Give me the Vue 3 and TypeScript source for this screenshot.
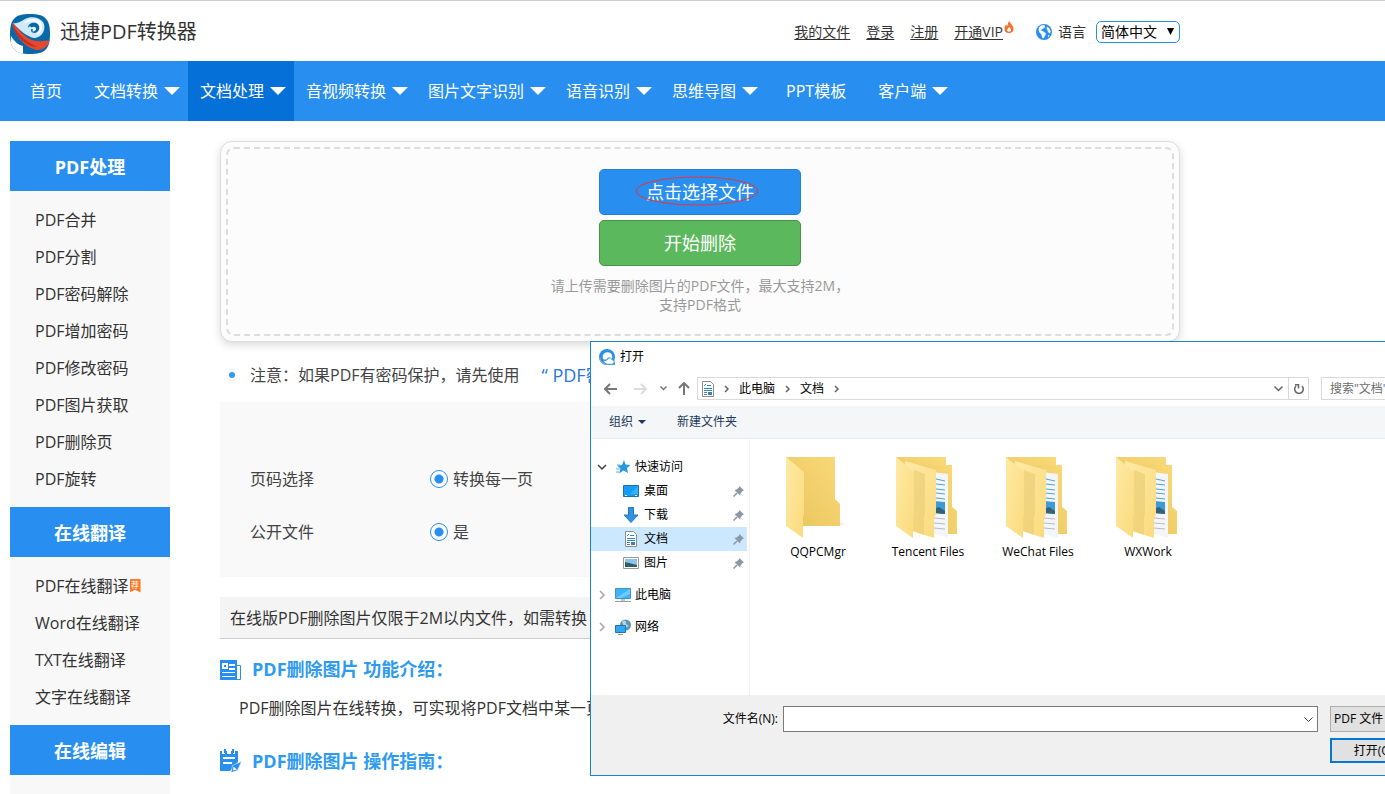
<script setup lang="ts">
import { ref } from 'vue'

interface NavItem { label: string; menu: boolean; active?: boolean }
interface SideGroup { title: string; items: { label: string; badge?: string }[] }
interface TreeRow { label: string; icon: string; level: 1 | 2; open?: boolean; selected?: boolean; spaced?: boolean }

const nav: NavItem[] = [
  { label: '首页', menu: false },
  { label: '文档转换', menu: true },
  { label: '文档处理', menu: true, active: true },
  { label: '音视频转换', menu: true },
  { label: '图片文字识别', menu: true },
  { label: '语音识别', menu: true },
  { label: '思维导图', menu: true },
  { label: 'PPT模板', menu: false },
  { label: '客户端', menu: true },
]

const groups: SideGroup[] = [
  {
    title: 'PDF处理',
    items: ['PDF合并', 'PDF分割', 'PDF密码解除', 'PDF增加密码', 'PDF修改密码', 'PDF图片获取', 'PDF删除页', 'PDF旋转'].map(label => ({ label })),
  },
  {
    title: '在线翻译',
    items: [{ label: 'PDF在线翻译', badge: '荐' }, { label: 'Word在线翻译' }, { label: 'TXT在线翻译' }, { label: '文字在线翻译' }],
  },
  { title: '在线编辑', items: [] },
]

const tree: TreeRow[] = [
  { label: '快速访问', icon: 'star', level: 1, open: true },
  { label: '桌面', icon: 'desktop', level: 2 },
  { label: '下载', icon: 'download', level: 2 },
  { label: '文档', icon: 'doc', level: 2, selected: true },
  { label: '图片', icon: 'picture', level: 2 },
  { label: '此电脑', icon: 'pc', level: 1, spaced: true },
  { label: '网络', icon: 'network', level: 1, spaced: true },
]

const folders = [
  { name: 'QQPCMgr', full: false },
  { name: 'Tencent Files', full: true },
  { name: 'WeChat Files', full: true },
  { name: 'WXWork', full: true },
]

const pageMode = ref('all')
const share = ref('yes')
const fileName = ref('')
</script>

<template>
  <div class="page">
    <header class="top">
      <div class="wrap top-row">
        <a href="#" class="brand">
          <svg class="logo" viewBox="0 0 40 40" aria-hidden="true">
            <defs><clipPath id="logoClip"><path d="M20 0C35 0 40 5 40 20S35 40 20 40 0 35 0 20 5 0 20 0Z" /></clipPath></defs>
            <g clip-path="url(#logoClip)">
              <rect width="40" height="40" fill="#0869a8" />
              <path d="M1 22C4 27 8 31 13 32L13 40H0Z" fill="#fff" />
              <path d="M3 9C8 10 11 7 15 5C21 2 29 3 33 8C37 15 32 24 24 24C18 23 10 17 3 9Z" fill="#cfe9f8" />
              <path d="M13 10C17 4 26 2 31 8C34 13 32 20 26 21C30 17 31 12 27 9C22 6 17 8 13 10Z" fill="#f5fbff" />
              <path d="M18 14C18 9 23 8 26 9C31 11 30 18 25 19C21 19 20 16 22 14C21 12 19 12 18 14Z" fill="#0869a8" />
              <path d="M21 15C22 12 26 12 26 15C26 17 23 18 22 17C24 16 23 15 21 15Z" fill="#eaf6fd" />
              <path d="M2 9C9 14 12 22 22 26C29 28 35 27 40 26C39 31 34 36 27 36C16 34 5 23 2 9Z" fill="#e5482f" />
              <path d="M2 9C6 18 13 26 27 33C18 33 5 24 2 9Z" fill="#bf2f23" />
            </g>
          </svg>
          <span>迅捷PDF转换器</span>
        </a>
        <div class="account">
          <a href="#">我的文件</a>
          <a href="#">登录</a>
          <a href="#">注册</a>
          <a href="#" class="vip">开通VIP</a>
          <svg class="flame" viewBox="0 0 10 12" aria-hidden="true">
            <path d="M5 0C6 2 9 4 9.500 7C10 10 8 12 5 12S0 10 .5 7C.7 5.500 1.500 4.500 2.200 3.500C2.500 5 3.200 5 3.500 4.500C4 3 4 1.500 5 0Z" fill="#f9722e" />
            <path d="M5 6C6 7 7.300 8 7 9.500C6.700 11 3.300 11 3 9.500C2.800 8 4.500 7.500 5 6Z" fill="#fff" />
          </svg>
          <svg class="globe" viewBox="0 0 16 16" aria-hidden="true">
            <circle cx="8" cy="8" r="8" fill="#288ff0" />
            <path d="M5 1.500L8.500 1L9 3L7.500 4.500L6 5L5 6.500L7.500 7.500L10 9.500L9 12L7.500 14.500L6 13.500L5.500 10.500L3.500 8.500L2.500 6L3 3.500Z" fill="#fff" />
            <path d="M11 2.500L13.500 4.500L14.800 8L13.500 9.500L12 8L11.500 6L10.500 5ZM12 11L13.500 11.500L12 13.500Z" fill="#fff" />
          </svg>
          <label for="lang">语言</label>
          <span class="lang">
            <select id="lang"><option>简体中文</option></select>
            <svg viewBox="0 0 7 7" aria-hidden="true"><path d="M0 0H7L3.500 7Z" /></svg>
          </span>
        </div>
      </div>
    </header>

    <nav class="nav">
      <div class="wrap nav-row">
        <a v-for="n in nav" :key="n.label" href="#" :class="['nav-item', { menu: n.menu, active: n.active }]">
          {{ n.label }}
          <svg v-if="n.menu" viewBox="0 0 16 8" aria-hidden="true"><path d="M0 0H16L8 8Z" fill="#fff" /></svg>
        </a>
      </div>
    </nav>

    <div class="wrap body">
      <aside class="side">
        <section v-for="g in groups" :key="g.title">
          <h2>{{ g.title }}</h2>
          <ul>
            <li v-for="i in g.items" :key="i.label">
              <a href="#">{{ i.label }}</a>
              <span v-if="i.badge" class="badge">{{ i.badge }}</span>
            </li>
          </ul>
        </section>
      </aside>

      <main class="main">
        <div class="upload">
          <div class="drop">
            <button type="button" class="btn pick">
              点击选择文件
              <svg class="ring" viewBox="0 0 124 30" aria-hidden="true"><ellipse cx="62" cy="15" rx="61" ry="14" fill="none" stroke="#e8343c" /></svg>
            </button>
            <button type="button" class="btn start">开始删除</button>
            <p>请上传需要删除图片的PDF文件，最大支持2M，<br>支持PDF格式</p>
          </div>
        </div>

        <p class="note"><i class="dot"></i>注意：如果PDF有密码保护，请先使用<a href="#">“ PDF密</a></p>

        <form class="options">
          <div class="opt">
            <span>页码选择</span>
            <label><input v-model="pageMode" type="radio" name="pages" value="all">转换每一页</label>
          </div>
          <div class="opt">
            <span>公开文件</span>
            <label><input v-model="share" type="radio" name="share" value="yes">是</label>
          </div>
        </form>

        <p class="limit">在线版PDF删除图片仅限于2M以内文件，如需转换</p>

        <h3>
          <svg viewBox="0 0 22 24" aria-hidden="true">
            <path d="M0 3H17V23H0Z" fill="#288ff0" />
            <path d="M17 8.500H20.500V22.500H17" fill="none" stroke="#288ff0" />
            <path d="M2 6H8V12H2ZM9 7H15V9H9ZM9 11H15V13H9ZM2 15H15V16H2ZM2 19H15V20H2Z" fill="#fff" />
            <path d="M4 8H6V10H4Z" fill="#288ff0" />
          </svg>
          PDF删除图片 功能介绍：
        </h3>
        <p class="intro">PDF删除图片在线转换，可实现将PDF文档中某一页</p>
        <h3>
          <svg viewBox="0 0 22 24" aria-hidden="true">
            <path d="M0 2H2V5H5V2H7V5H11V2H13V5H15V2H18V13L10 22H0ZM4 0H6V4H4ZM12 0H14V4H12Z" fill="#288ff0" />
            <path d="M3 8H15V10H3ZM3 13H12V15H3Z" fill="#fff" />
            <path d="M21.500 12.500L12.500 16.500L11 23.500L17.500 21.500Z" fill="#288ff0" stroke="#fff" stroke-width=".5" />
            <path d="M13.500 17.500L13 21.500L17 20.500Z" fill="#fff" />
          </svg>
          PDF删除图片 操作指南：
        </h3>
      </main>
    </div>

    <div class="dialog" role="dialog" aria-labelledby="dlgTitle">
      <div class="title">
        <svg viewBox="0 0 16 16" aria-hidden="true">
          <circle cx="8" cy="8" r="8" fill="#2591ea" />
          <path d="M.7 8A7.300 7.300 0 0 0 8 15.300" fill="none" stroke="#7fa6c6" stroke-width="1.400" />
          <circle cx="8.500" cy="8" r="4.800" fill="#fff" />
          <path d="M3.700 9C5 11 7 11 8.500 9C10 7.500 12 8.500 13 10C15.500 10 16 12 16 16H8C6 16 4 13 3.700 9Z" fill="#4d9fdd" />
          <path d="M5 12C6.500 12.500 8.500 11.500 9.500 10C11 8.500 12.500 9.500 12.500 11C15 11 15.500 14.500 13 14.800H8.500C7 14.800 5.500 13.500 5 12Z" fill="#fff" />
        </svg>
        <span id="dlgTitle">打开</span>
      </div>

      <div class="address-row">
        <button type="button" class="tool wide" aria-label="后退"><svg width="13" height="12" viewBox="0 0 13 12"><path d="M6 1L1 6L6 11M1 6H13" fill="none" stroke="#777" stroke-width="2" /></svg></button>
        <button type="button" class="tool wide" aria-label="前进"><svg width="13" height="12" viewBox="0 0 13 12"><path d="M7 1L12 6L7 11M12 6H0" fill="none" stroke="#dcdcdc" stroke-width="2" /></svg></button>
        <button type="button" class="tool recent" aria-label="最近"><svg width="7" height="5" viewBox="0 0 7 5"><path d="M0.500 0.500L3.500 3.500L6.500 0.500" fill="none" stroke="#777" stroke-width="1.500" /></svg></button>
        <button type="button" class="tool up" aria-label="上移"><svg width="12" height="13" viewBox="0 0 12 13"><path d="M1 6L6 1L11 6M6 1V13" fill="none" stroke="#777" stroke-width="2" /></svg></button>
        <div class="address">
          <svg width="12" height="16" viewBox="0 0 12 16" aria-hidden="true">
            <path d="M.5.500H8.500L11.500 3.500V15.500H.5Z" fill="#fff" stroke="#8c8c8c" />
            <path d="M2 7.500H10M2 9.500H10M5 4.500H9M2 5L4 3" stroke="#2a8ad0" /><path d="M2 11.500H5M2 13.500H5" stroke="#777" /><path d="M6 11H10V14H6Z" fill="#3f7fa8" />
          </svg>
          <svg class="sep" viewBox="0 0 24 8" aria-hidden="true"><path d="M10.500 1L13.500 4L10.500 7" fill="none" stroke="#666" stroke-width="1.500" /></svg>
          <span>此电脑</span>
          <svg class="sep" viewBox="0 0 24 8" aria-hidden="true"><path d="M10.500 1L13.500 4L10.500 7" fill="none" stroke="#666" stroke-width="1.500" /></svg>
          <span>文档</span>
          <svg class="sep" viewBox="0 0 24 8" aria-hidden="true"><path d="M10.500 1L13.500 4L10.500 7" fill="none" stroke="#666" stroke-width="1.500" /></svg>
          <button type="button" class="tool drop-btn" aria-label="历史"><svg width="9" height="6" viewBox="0 0 9 6"><path d="M.5.500L4.500 4.500L8.500.500" fill="none" stroke="#666" stroke-width="1.500" /></svg></button>
          <button type="button" class="tool refresh" aria-label="刷新"><svg width="12" height="12" viewBox="0 0 12 12"><path d="M3 3A4.300 4.300 0 1 0 9 3M2 1.700H5.500V5.500" fill="none" stroke="#666" stroke-width="1.500" /></svg></button>
        </div>
        <input class="search" type="text" aria-label="搜索" placeholder="搜索&quot;文档&quot;">
      </div>

      <div class="toolbar">
        <button type="button">组织<svg width="8" height="4" viewBox="0 0 8 4" aria-hidden="true"><path d="M0 0H8L4 4Z" fill="#1e395b" /></svg></button>
        <button type="button">新建文件夹</button>
      </div>

      <div class="content">
        <ul class="tree">
          <li v-for="r in tree" :key="r.label" :class="['row', `l${r.level}`, { selected: r.selected, spaced: r.spaced }]">
            <svg v-if="r.level === 1" class="twist" viewBox="0 0 10 10" aria-hidden="true">
              <path v-if="r.open" d="M1 3L5 7L9 3" fill="none" stroke="#404040" stroke-width="1.500" />
              <path v-else d="M3 1L7 5L3 9" fill="none" stroke="#a6a6a6" stroke-width="1.500" />
            </svg>
            <svg class="ico" viewBox="0 0 16 16" aria-hidden="true">
              <g v-if="r.icon === 'star'">
                <path d="M9 1L10.500 5.500L15.500 6L12 9L13 14L8.500 11.500L4 14.500L5.500 9.500L2 6.500L7 6Z" fill="#2899e0" />
                <path d="M1 10H5M1 13H4M2 6H5" stroke="#5caee2" />
              </g>
              <g v-else-if="r.icon === 'desktop'">
                <path d="M.5 2.500H15.500V13.500H.5Z" fill="#159cf7" stroke="#1673bb" /><path d="M15 3V11L7 11Z" fill="#39afff" /><path d="M2 12.500H4M12 12.500H14" stroke="#fff" />
              </g>
              <path v-else-if="r.icon === 'download'" d="M5.500.500H10.500V8H15L8 15.500L1 8H5.500Z" fill="#3391e4" stroke="#2479c4" />
              <g v-else-if="r.icon === 'doc'">
                <path d="M2.500.500H10.500L13.500 3.500V15.500H2.500Z" fill="#fff" stroke="#8c8c8c" />
                <path d="M4 7.500H12M4 9.500H12M7 4.500H11M4 5L6 3" stroke="#2a8ad0" /><path d="M4 11.500H7M4 13.500H7" stroke="#777" /><path d="M8 11H12V14H8Z" fill="#3f7fa8" />
              </g>
              <g v-else-if="r.icon === 'picture'">
                <path d="M.5 2.500H15.500V13.500H.5Z" fill="#fff" stroke="#999" /><path d="M2 4H14V12H2Z" fill="#8cc4ea" /><path d="M2 7L6 8L14 10V12H2Z" fill="#2f5d66" />
              </g>
              <g v-else-if="r.icon === 'pc'">
                <path d="M.5 1.500H15.500V11.500H.5Z" fill="#3db4fa" stroke="#4b8fbd" /><path d="M15 2V7L6 11H1Z" fill="#6ccbff" /><path d="M0 14.500H16" stroke="#8da3b3" /><path d="M6 12H10V14H6Z" fill="#b6c7d3" />
              </g>
              <g v-else>
                <circle cx="10.500" cy="6" r="5.500" fill="#5d93b8" /><path d="M7 3C9 0 12 2 11 5L14 7L10 9Z" fill="#b7d6e4" /><path d="M.5 6.500H10.500V13.500H.5Z" fill="#2fa8f3" stroke="#2774aa" /><path d="M3 15.500H8" stroke="#7f9cb0" />
              </g>
            </svg>
            <span>{{ r.label }}</span>
            <svg v-if="r.level === 2" class="pin" viewBox="0 0 11 11" aria-hidden="true">
              <path d="M6.500 0L11 4.500L9.500 5L7.500 7.500L7 9.500L1.500 4L3.500 3.500L6 1.500Z" fill="#8c98a3" /><path d="M4 7L.5 10.500" stroke="#8c98a3" stroke-width="1.500" />
            </svg>
          </li>
        </ul>

        <ul class="files">
          <li v-for="f in folders" :key="f.name">
            <svg class="folder" viewBox="0 0 64 84" aria-hidden="true">
              <defs>
                <linearGradient id="flap" x1="0" y1="0" x2="1" y2="1"><stop offset="0" stop-color="#ffe9a6" /><stop offset="1" stop-color="#fadb7c" /></linearGradient>
                <linearGradient id="back" x1="0" y1="1" x2="1" y2="0"><stop offset="0" stop-color="#e9c45e" /><stop offset="1" stop-color="#f9da78" /></linearGradient>
              </defs>
              <g v-if="!f.full">
                <path d="M54 65L60 67L54 69H16Z" fill="#f1f1f1" />
                <path d="M0 0H49V42L54 47V69H14Z" fill="url(#back)" />
              </g>
              <g v-else>
                <path d="M0 0H50V60H8Z" fill="url(#back)" />
                <path d="M26 8H56V50L61 54V77H30Z" fill="url(#back)" />
                <path d="M36 15L52 17V81L36 76Z" fill="#f3f5f8" />
                <path d="M40 22L49 24M40 27L49 28M40 32L49 33M40 36L49 37M40 41L49 42" stroke="#4aa5dc" />
                <path d="M38 44L49 45V57L38 56Z" fill="#3c9bd8" /><path d="M38 52L43 50L49 54V57L38 56Z" fill="#33627a" />
                <path d="M38 61L49 62M38 66L49 67M38 71L49 72" stroke="#b7bcc2" />
                <path d="M9 4L40 13V57L38 61V81L9 72Z" fill="url(#flap)" />
                <path d="M18 13L29 17V56L28 60V78L17 74Z" fill="#ebcd75" opacity=".65" />
              </g>
              <path d="M0 0L18 15V56L17 60V81L0 69Z" fill="url(#flap)" />
            </svg>
            <span>{{ f.name }}</span>
          </li>
        </ul>
      </div>

      <div class="footer">
        <label for="fname">文件名(N):</label>
        <div class="combo">
          <input id="fname" v-model="fileName" type="text">
          <button type="button" class="tool" aria-label="展开"><svg width="9" height="5" viewBox="0 0 9 5"><path d="M.5.500L4.500 4.500L8.500.500" fill="none" stroke="#444" /></svg></button>
        </div>
        <select class="type" aria-label="文件类型"><option>PDF 文件 (*.pdf)</option></select>
        <button type="button" class="open">打开(O)</button>
      </div>
    </div>
  </div>
</template>

<style>
html, body { margin: 0; background: #fff; }
</style>

<style scoped>
.page {
  position: relative;
  height: 100vh;
  overflow: hidden;
  font: 16px/24px "Open Sans", "Noto Sans CJK SC", sans-serif;
  color: #333;
}
.page * { box-sizing: border-box; }
button, input, select { font: inherit; color: inherit; margin: 0; }
button { cursor: pointer; }
a { color: inherit; text-decoration: none; }
ul { list-style: none; margin: 0; padding: 0; }
p, h2, h3 { margin: 0; }
svg { display: block; flex: none; }
.wrap { max-width: 1180px; padding-left: 10px; }

.top { border-top: 1px solid #ccc; }
.top-row { display: flex; align-items: center; justify-content: space-between; height: 60px; padding-top: 2px; }
.brand { display: flex; align-items: center; gap: 10px; font-size: 20px; }
.logo { width: 40px; height: 40px; margin-top: 4px; }
.account { display: flex; align-items: center; font-size: 14px; }
.account a { text-decoration: underline; text-underline-offset: 2px; margin-right: 16px; }
.account .vip { margin-right: 1px; }
.flame { width: 10px; height: 12px; margin-bottom: 10px; }
.globe { width: 16px; height: 16px; margin: 0 6px 0 22px; }
.lang { position: relative; margin-left: 10px; }
.lang select { appearance: none; display: block; width: 84px; height: 22px; padding: 0 4px; border: 1px solid #288ff0; border-radius: 5px; background: #fff; color: #000; line-height: 20px; }
.lang svg { position: absolute; right: 6px; top: 7px; width: 7px; height: 7px; pointer-events: none; }

.nav { background: #288ff0; color: #fff; }
.nav-row { display: flex; height: 60px; }
.nav-item { display: flex; align-items: center; gap: 6px; padding: 0 20px; white-space: nowrap; }
.nav-item.menu { padding: 0 8px 0 12px; }
.nav-item.active { background: #0470d8; }
.nav-item svg { width: 16px; height: 8px; }

.body { display: flex; gap: 50px; padding-top: 20px; }
.side { flex: 0 0 160px; background: #f8f8f8; }
.side h2 { padding-top: 2px; background: #288ff0; color: #fff; font-size: 18px; line-height: 48px; text-align: center; }
.side ul { padding: 10px 0 10px 25px; }
.side li { display: flex; align-items: center; height: 37px; }
.badge { width: 11px; height: 14px; margin-left: 1px; background: #fa7a28; color: #fff; font-size: 8px; line-height: 12px; text-align: center; clip-path: polygon(0 0, 100% 0, 100% 100%, 50% 80%, 0 100%); }

.main { flex: 1; min-width: 0; }
.upload { padding: 5px; border: 1px solid #ddd; border-radius: 12px; background: #fcfcfc; box-shadow: 0 3px 8px rgba(0, 0, 0, .15); }
.drop { display: flex; flex-direction: column; align-items: center; gap: 5px; padding: 20px 0; border: 2px dashed #ddd; border-radius: 8px; }
.btn { position: relative; width: 202px; height: 46px; padding: 0; border-radius: 5px; color: #fff; font-size: 18px; }
.pick { background: #288ff0; border: 1px solid #2180dc; }
.start { background: #5cb85c; border: 1px solid #479447; }
.ring { position: absolute; left: 35px; top: 6px; width: 124px; height: 30px; }
.drop p { padding: 5px 0 0; font-size: 14px; line-height: 19px; text-align: center; color: #999; }

.note { display: flex; align-items: center; height: 60px; padding: 6px 0 0 9px; color: #444; white-space: nowrap; overflow: hidden; }
.dot { width: 6px; height: 6px; margin-right: 15px; border-radius: 50%; background: #2f9bef; }
.note a { margin-left: 22px; font-size: 18px; color: #2874e8; }
.options { padding: 50px 30px 19px; background: #f9f9f9; color: #444; }
.opt { display: flex; align-items: center; height: 53px; }
.opt span { width: 180px; }
.opt label { display: flex; align-items: center; gap: 5px; }
.opt input { appearance: none; width: 18px; height: 18px; border: 1px solid #288ff0; border-radius: 50%; background: radial-gradient(circle, #288ff0 4px, #fff 5px); }
.limit { margin-top: 20px; padding: 9px 10px 8px; background: #f4f4f4; border-bottom: 1px solid #ccc; white-space: nowrap; overflow: hidden; }
h3 { display: flex; align-items: center; gap: 10px; margin-top: 18px; font-size: 18px; color: #2f9bef; }
h3 svg { width: 22px; height: 24px; }
.intro { margin: 15px 0 29px; padding-left: 19px; white-space: nowrap; overflow: hidden; }

.dialog { position: absolute; left: 590px; right: -190px; top: 341px; border: 1px solid #1883d7; background: #fff; color: #000; font-size: 12px; line-height: 20px; }
.tool { display: flex; align-items: center; justify-content: center; height: 100%; padding: 0; border: 0; background: none; }
.title { display: flex; align-items: center; gap: 5px; height: 29px; padding-left: 8px; }
.title svg { width: 16px; height: 16px; }
.address-row { display: flex; align-items: center; height: 35px; padding: 0 11px 0 4px; }
.wide { width: 30px; }
.recent { width: 16px; }
.up { width: 26px; }
.address { flex: 1; display: flex; align-items: center; height: 23px; padding-left: 4px; border: 1px solid #d9d9d9; }
.sep { width: 25px; height: 8px; }
.drop-btn { width: 20px; margin-left: auto; }
.refresh { width: 20px; border-left: 1px solid #d9d9d9; }
.search { flex: 0 0 242px; height: 23px; margin-left: 12px; padding: 0 8px; border: 1px solid #d9d9d9; background: #fff; }
.search::placeholder { color: #6d6d6d; }
.toolbar { display: flex; align-items: center; gap: 31px; height: 33px; padding-left: 18px; background: #f5f6f7; border-bottom: 1px solid #e8e9ea; color: #1e395b; }
.toolbar button { display: flex; align-items: center; gap: 5px; padding: 0; border: 0; background: none; }

.content { display: flex; height: 256px; }
.tree { flex: 0 0 159px; padding: 16px 2px 0 0; border-right: 1px solid #f2f2f2; }
.row { display: flex; align-items: center; gap: 4px; height: 24px; }
.l1 { padding-left: 6px; }
.l2 { padding: 0 3px 0 32px; gap: 5px; }
.spaced { margin-top: 8px; }
.selected { background: #cce8ff; }
.twist { width: 10px; height: 10px; margin-right: 4px; }
.ico { width: 16px; height: 16px; }
.pin { width: 11px; height: 11px; margin-left: auto; }
.files { display: flex; padding: 18px 0 0 13px; }
.files li { display: flex; flex-direction: column; align-items: center; gap: 1px; width: 110px; }
.folder { width: 64px; height: 84px; }

.footer { display: grid; grid-template-columns: 187px 1fr 233px; column-gap: 12px; row-gap: 6px; padding: 11px 11px 12px 0; background: #f0f0f0; }
.footer label { padding-top: 3px; text-align: right; }
.combo { display: flex; height: 26px; margin-left: -7px; border: 1px solid #7a7a7a; background: #fff; }
.combo input { flex: 1; min-width: 0; border: 0; padding: 0 4px; background: none; outline: none; }
.combo .tool { width: 17px; }
.type { appearance: none; height: 26px; padding: 0 3px; border: 1px solid #adadad; border-radius: 0; background: #e1e1e1; }
.open { grid-column: 3; width: 88px; height: 25px; padding: 0; border: 2px solid #0078d7; background: #e1e1e1; }
</style>
